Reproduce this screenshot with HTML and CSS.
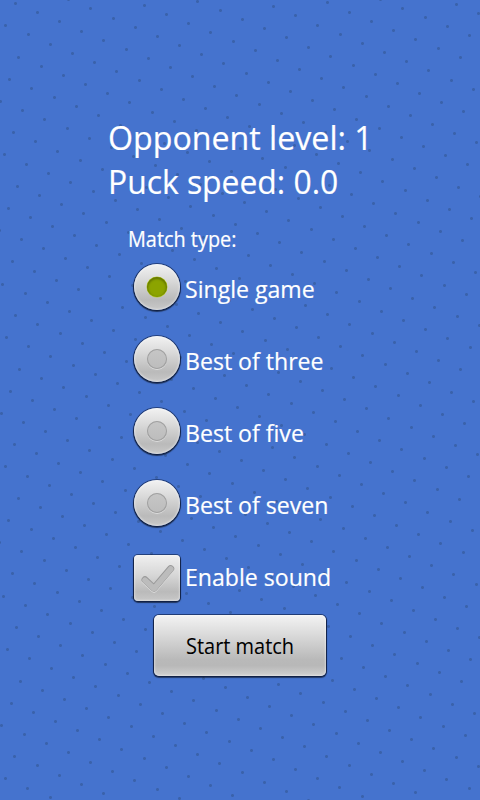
FILE: index.html
```html
<!DOCTYPE html>
<html lang="en">
<head>
<meta charset="utf-8">
<title>Match settings</title>
<link rel="stylesheet" href="styles.css">
</head>
<body>
<svg class="dots" width="480" height="800" aria-hidden="true"></svg>
<main class="screen">
  <div class="status">
    <div><span class="fit level">Opponent level: 1</span></div>
    <div><span class="fit speed">Puck speed: 0.0</span></div>
  </div>
  <div class="form">
    <div class="label"><span class="fit">Match type:</span></div>
    <div class="option"><span class="radio on"><i></i></span><span class="fit text">Single game</span></div>
    <div class="option"><span class="radio"><i></i></span><span class="fit text">Best of three</span></div>
    <div class="option"><span class="radio"><i></i></span><span class="fit text">Best of five</span></div>
    <div class="option"><span class="radio"><i></i></span><span class="fit text">Best of seven</span></div>
    <div class="option check"><span class="box"><svg width="46" height="46" viewBox="0 0 46 46">
      <path class="lit" d="M11 25.8 L20 34.2 L36.7 14.6"/>
      <path class="rim" d="M11 24.8 L20 33.2 L36.7 13.6"/>
      <path class="fill" d="M11 25.2 L20 33.6 L36.7 14"/>
    </svg></span><span class="fit text">Enable sound</span></div>
  </div>
  <button class="start"><span class="fit">Start match</span></button>
</main>
<script src="dots.js"></script>
</body>
</html>
```
FILE: styles.css
```css
* { box-sizing: border-box; }
body {
  margin: 0;
  width: 480px;
  height: 800px;
  overflow: hidden;
  background: #4573ce;
  color: #fff;
  font-family: "Open Sans", "Noto Sans", sans-serif;
}
.dots { position: absolute; left: 0; top: 0; shape-rendering: crispEdges; }
.dots .soft { fill: #3f69b9; }
.dots .core { fill: #3a62ab; }
.screen {
  position: relative;
  height: 800px;
  padding-top: 116px;
  display: flex;
  flex-direction: column;
  align-items: center;
}
.fit {
  display: inline-block;
  white-space: nowrap;
  transform-origin: 0 50%;
  transform: scaleX(.95);
  -webkit-text-stroke: .2px currentColor;
}
.status { width: 264px; font-size: 33px; line-height: 44px; }
.level { transform: scaleX(.975); }
.speed { transform: scaleX(.965); }
.form { width: 224px; margin-top: 20px; }
.label { height: 39px; font-size: 21px; line-height: 30px; }
.label .fit { transform: scaleX(.946); }
.option { height: 72px; display: flex; align-items: flex-start; padding-left: 6px; }
.text { font-size: 24px; line-height: 34px; margin: 9px 0 0 5px; transform: scaleX(.962); }
.radio {
  width: 46px;
  height: 46px;
  margin-top: 1px;
  border-radius: 50%;
  display: grid;
  place-items: center;
  background: linear-gradient(#f2f2f2, #dadada 35%, #bababa 78%, #c8c8c8);
  box-shadow: 0 0 0 1px rgba(0,10,40,.45), 0 1px 1px 1px rgba(0,0,0,.55), inset 0 0 2px 1px rgba(255,255,255,.4);
}
.radio i {
  width: 20px;
  height: 20px;
  border-radius: 50%;
  background: linear-gradient(#c6c6c6, #bcbcbc);
  box-shadow: inset 0 0 0 1px #a0a0a0, 0 1px 0 #dcdcdc;
}
.radio.on i {
  background: #8ca400;
  box-shadow: inset 0 1px 2px 1px #667800, 0 0 0 .5px #b9cf2e;
}
.check { height: 64px; }
.box {
  width: 46px;
  height: 46px;
  margin-top: 4px;
  border-radius: 4px;
  background: linear-gradient(#f0f0f0, #d6d6d6 45%, #bababa 80%, #c8c8c8);
  box-shadow: 0 0 0 1px rgba(0,10,40,.45), 0 1px 1px 1px rgba(0,0,0,.55), inset 0 0 2px 1px rgba(255,255,255,.35);
}
.box svg { display: block; }
.box path { fill: none; stroke-linecap: round; stroke-linejoin: round; }
.box .lit { stroke: #dcdcdc; stroke-width: 7; }
.box .rim { stroke: #999; stroke-width: 7; }
.box .fill { stroke: #bcbcbc; stroke-width: 5.6; }
.start {
  width: 172px;
  height: 61px;
  padding: 0 0 0 32px;
  border: 0;
  border-radius: 5px;
  text-align: left;
  font: 21px/30px "Open Sans", "Noto Sans", sans-serif;
  color: #000;
  background: linear-gradient(#f3f3f3, #dcdcdc 30%, #b9b9b9 73%, #b8b8b8 83%, #cfcfcf);
  box-shadow: 0 0 0 1px rgba(0,10,40,.5), 0 1px 1px 1px rgba(0,0,0,.5), inset 0 0 2px 1px rgba(255,255,255,.4);
}
.start .fit { -webkit-text-stroke-width: .05px; }
```
FILE: dots.js
```js
// Square lattice of small dots, 24px apart, turned by 22.5 degrees.
const svg = document.querySelector('.dots');
const ax = 22.173, ay = 9.184;
let soft = '', core = '';
for (let i = -20; i < 50; i++) {
  for (let j = -20; j < 50; j++) {
    const x = Math.floor(15.16 + i * ax - j * ay);
    const y = Math.floor(3.49 + i * ay + j * ax);
    if (x < -2 || x > 481 || y < -2 || y > 801) continue;
    soft += `M${x - 1} ${y - 1}h3v3h-3z`;
    core += `M${x} ${y - 1}h1v1h1v1h-1v1h-1v-1h-1v-1h1z`;
  }
}
svg.innerHTML = `<path class="soft" d="${soft}"/><path class="core" d="${core}"/>`;
```
